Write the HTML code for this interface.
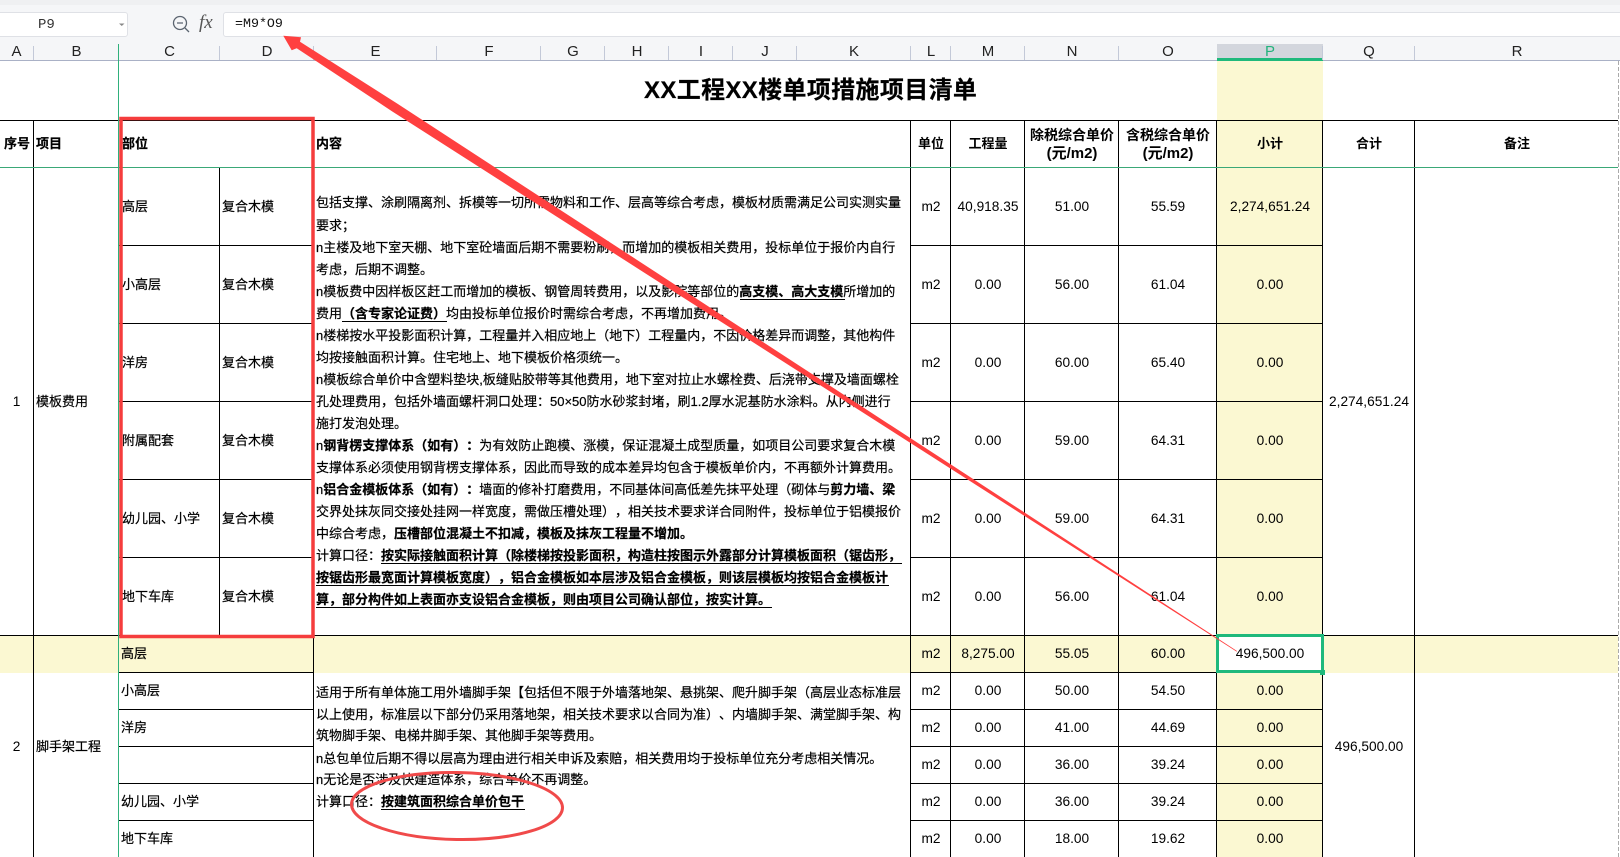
<!DOCTYPE html>
<html lang="zh-CN">
<head>
<meta charset="utf-8">
<title>XX工程XX楼单项措施项目清单</title>
<style>
html,body{margin:0;padding:0;background:#fff;}
body{position:relative;width:1620px;height:857px;overflow:hidden;font-family:"Liberation Sans","Noto Sans CJK SC",sans-serif;font-size:13px;color:#000;text-spacing-trim:space-all;}
.a{position:absolute;}
.t{position:absolute;white-space:nowrap;height:20px;line-height:20px;margin-top:1px;-webkit-text-stroke:.2px #000;}
.n{font-size:13.7px;text-align:center;-webkit-text-stroke:0;}
.bar{margin-top:0;-webkit-text-stroke:0;}
.h{position:absolute;top:42px;height:20px;line-height:20px;font-size:15px;color:#222;text-align:center;white-space:nowrap;}
.b,b{font-weight:bold;}
.L{left:911px;width:40px;}.M{left:951px;width:74px;}.N{left:1025px;width:94px;}.O{left:1119px;width:98px;}.P{left:1217px;width:106px;}.Q{left:1323px;width:92px;}.R{left:1415px;width:204px;}
.A{left:0;width:33px;}
.B{left:36px;}.C{left:122px;}.C2{left:121px;}.D{left:222px;}.E{left:316px;}
.u{position:absolute;height:1px;background:#000;}
</style>
</head>
<body>
<!-- top bar -->
<div class="a" style="left:0;top:0;width:1620px;height:60px;background:#f5f6f8;"></div>
<div class="a" style="left:0;top:0;width:1620px;height:5px;background:#eff0f2;"></div>
<div class="a" style="left:-4px;top:12px;width:130px;height:23px;background:#fff;border:1px solid #dfe1e6;border-radius:3px;"></div>
<div class="t bar" style="left:38px;top:15px;font-family:'Liberation Mono',monospace;font-size:14px;color:#333;">P9</div>
<svg class="a" style="left:0;top:0" width="320" height="44" viewBox="0 0 320 44">
<path d="M119 23.500h5.500l-2.750 2.500z" fill="#888"/>
<circle cx="180" cy="23" r="6.500" fill="none" stroke="#5b6470" stroke-width="1.300"/>
<path d="M185 28l4 4M177 23h6" fill="none" stroke="#5b6470" stroke-width="1.300"/>
</svg>
<div class="t bar" style="left:199px;top:13px;font-family:'Liberation Serif',serif;font-style:italic;font-size:19px;color:#555;">fx</div>
<div class="a" style="left:223px;top:12px;width:1400px;height:23px;background:#fff;border:1px solid #dfe1e6;border-radius:3px;"></div>
<div class="t bar" style="left:235px;top:14px;font-family:'Liberation Mono',monospace;font-size:13.300px;color:#111;">=M9*O9</div>

<!-- column header -->
<div class="a" style="left:1217px;top:44px;width:106px;height:15px;background:#d3d6dd;"></div>
<div class="a" style="left:0;top:60px;width:1620px;height:1px;background:#aab1c6;"></div>
<div class="a" style="left:1217px;top:58px;width:106px;height:3px;background:#1fb97c;"></div>
<svg class="a" style="left:0;top:44px" width="1620" height="16" viewBox="0 0 1620 16">
<path d="M33.500 2V16M219.500 2V16M313.500 2V16M436.500 2V16M540.500 2V16M604.500 2V16M668.500 2V16M732.500 2V16M796.500 2V16M910.500 2V16M950.500 2V16M1024.500 2V16M1118.500 2V16M1322.500 2V16M1414.500 2V16" stroke="#c3c9d8" stroke-width="1" fill="none"/>
</svg>
<div class="h" style="left:0;width:33px;">A</div>
<div class="h" style="left:34px;width:85px;">B</div>
<div class="h" style="left:119px;width:101px;">C</div>
<div class="h" style="left:220px;width:94px;">D</div>
<div class="h" style="left:314px;width:123px;">E</div>
<div class="h" style="left:437px;width:104px;">F</div>
<div class="h" style="left:541px;width:64px;">G</div>
<div class="h" style="left:605px;width:64px;">H</div>
<div class="h" style="left:669px;width:64px;">I</div>
<div class="h" style="left:733px;width:64px;">J</div>
<div class="h" style="left:797px;width:114px;">K</div>
<div class="h" style="left:911px;width:40px;">L</div>
<div class="h" style="left:951px;width:74px;">M</div>
<div class="h" style="left:1025px;width:94px;">N</div>
<div class="h" style="left:1119px;width:98px;">O</div>
<div class="h" style="left:1217px;width:106px;color:#23b37c;">P</div>
<div class="h" style="left:1323px;width:92px;">Q</div>
<div class="h" style="left:1415px;width:204px;">R</div>

<!-- yellow fills -->
<div class="a" style="left:1217px;top:61px;width:106px;height:796px;background:#fbf8d2;"></div>
<div class="a" style="left:0;top:635px;width:1618px;height:38px;background:#fbf8d2;"></div>
<div class="a" style="left:1217px;top:636px;width:106px;height:36px;background:#fff;"></div>

<!-- grid -->
<svg class="a" style="left:0;top:0" width="1620" height="857" viewBox="0 0 1620 857" shape-rendering="crispEdges">
<path d="M0 120.500H1618M0 635.500H1618
M119 245.500H313M119 323.500H313M119 401.500H313M119 479.500H313M119 557.500H313
M910 245.500H1323M910 323.500H1323M910 401.500H1323M910 479.500H1323M910 557.500H1323
M119 672.500H313M119 709.500H313M119 746.500H313M119 783.500H313M119 820.500H313
M910 672.500H1323M910 709.500H1323M910 746.500H1323M910 783.500H1323M910 820.500H1323
M33.500 120V857M313.500 120V857M910.500 120V857M950.500 120V857M1024.500 120V857M1118.500 120V857M1216.500 120V857M1322.500 120V857M1414.500 120V857
M219.500 168V635" stroke="#000" stroke-width="1" fill="none"/>
<path d="M0 167.500H1618" stroke="#3aa877" stroke-width="1" fill="none"/>
<path d="M118.500 44V857" stroke="#2fb07c" stroke-width="1" fill="none"/>
<path d="M1618.500 61V857" stroke="#aaa" stroke-width="1" stroke-dasharray="4 2" fill="none"/>
</svg>

<!-- title -->
<div class="t b" style="left:644px;top:76px;height:30px;line-height:30px;font-size:24px;letter-spacing:.35px;margin-top:0;">XX工程XX楼单项措施项目清单</div>

<!-- header row -->
<div class="t b" style="left:4px;top:133px;">序号</div>
<div class="t b B" style="top:133px;">项目</div>
<div class="t b C" style="top:133px;">部位</div>
<div class="t b E" style="top:133px;">内容</div>
<div class="t b n L" style="top:133px;font-size:13px;">单位</div>
<div class="t b n M" style="top:133px;font-size:13px;">工程量</div>
<div class="t b n N" style="top:124px;font-size:14px;">除税综合单价</div>
<div class="t b n N" style="top:143px;font-size:15px;">(元/m2)</div>
<div class="t b n O" style="top:124px;font-size:14px;">含税综合单价</div>
<div class="t b n O" style="top:143px;font-size:15px;">(元/m2)</div>
<div class="t b n P" style="top:133px;font-size:13px;">小计</div>
<div class="t b n Q" style="top:133px;font-size:13px;">合计</div>
<div class="t b n R" style="top:133px;font-size:13px;">备注</div>

<!-- section 1 left -->
<div class="t n A" style="top:391px;">1</div>
<div class="t B" style="top:391px;">模板费用</div>
<div class="t C" style="top:196px;">高层</div><div class="t D" style="top:196px;">复合木模</div>
<div class="t C" style="top:274px;">小高层</div><div class="t D" style="top:274px;">复合木模</div>
<div class="t C" style="top:352px;">洋房</div><div class="t D" style="top:352px;">复合木模</div>
<div class="t C" style="top:430px;">附属配套</div><div class="t D" style="top:430px;">复合木模</div>
<div class="t C" style="top:508px;">幼儿园、小学</div><div class="t D" style="top:508px;">复合木模</div>
<div class="t C" style="top:586px;">地下车库</div><div class="t D" style="top:586px;">复合木模</div>

<!-- section 1 content -->
<div class="t E" style="top:193px;margin-top:0;">包括支撑、涂刷隔离剂、拆模等一切所需物料和工作、层高等综合考虑，模板材质需满足公司实测实量</div>
<div class="t E" style="top:215px;">要求；</div>
<div class="t E" style="top:237px;">n主楼及地下室天棚、地下室砼墙面后期不需要粉刷，而增加的模板相关费用，投标单位于报价内自行</div>
<div class="t E" style="top:259px;">考虑，后期不调整。</div>
<div class="t E" style="top:281px;">n模板费中因样板区赶工而增加的模板、钢管周转费用，以及影院等部位的<b>高支模、高大支模</b>所增加的</div>
<div class="t E" style="top:303px;">费用<b>（含专家论证费）</b>均由投标单位报价时需综合考虑，不再增加费用。</div>
<div class="t E" style="top:325px;">n楼梯按水平投影面积计算，工程量并入相应地上（地下）工程量内，不因价格差异而调整，其他构件</div>
<div class="t E" style="top:347px;">均按接触面积计算。住宅地上、地下模板价格须统一。</div>
<div class="t E" style="top:369px;">n模板综合单价中含塑料垫块,板缝贴胶带等其他费用，地下室对拉止水螺栓费、后浇带支撑及墙面螺栓</div>
<div class="t E" style="top:391px;">孔处理费用，包括外墙面螺杆洞口处理：50×50防水砂浆封堵，刷1.2厚水泥基防水涂料。从内侧进行</div>
<div class="t E" style="top:413px;">施打发泡处理。</div>
<div class="t E" style="top:435px;">n<b>钢背楞支撑体系（如有）：</b>为有效防止跑模、涨模，保证混凝土成型质量，如项目公司要求复合木模</div>
<div class="t E" style="top:457px;">支撑体系必须使用钢背楞支撑体系，因此而导致的成本差异均包含于模板单价内，不再额外计算费用。</div>
<div class="t E" style="top:479px;">n<b>铝合金模板体系（如有）：</b>墙面的修补打磨费用，不同基体间高低差先抹平处理（砌体与<b>剪力墙、梁</b></div>
<div class="t E" style="top:501px;">交界处抹灰同交接处挂网一样宽度，需做压槽处理），相关技术要求详合同附件，投标单位于铝模报价</div>
<div class="t E" style="top:523px;">中综合考虑，<b>压槽部位混凝土不扣减，模板及抹灰工程量不增加。</b></div>
<div class="t E" style="top:545px;">计算口径：<b>按实际接触面积计算（除楼梯按投影面积，构造柱按图示外露部分计算模板面积（锯齿形，</b></div>
<div class="t E b" style="top:567px;">按锯齿形最宽面计算模板宽度），铝合金模板如本层涉及铝合金模板，则该层模板均按铝合金模板计</div>
<div class="t E b" style="top:589px;">算，部分构件如上表面亦支设铝合金模板，则由项目公司确认部位，按实计算。</div>
<div class="u" style="left:740px;top:299px;width:105px;"></div>
<div class="u" style="left:342px;top:321px;width:105px;"></div>
<div class="u" style="left:381px;top:563px;width:521px;"></div>
<div class="u" style="left:316px;top:585px;width:573px;"></div>
<div class="u" style="left:316px;top:607px;width:456px;"></div>

<!-- section 1 numbers -->
<div class="t n L" style="top:196px;">m2</div><div class="t n M" style="top:196px;">40,918.35</div><div class="t n N" style="top:196px;">51.00</div><div class="t n O" style="top:196px;">55.59</div><div class="t n P" style="top:196px;">2,274,651.24</div>
<div class="t n L" style="top:274px;">m2</div><div class="t n M" style="top:274px;">0.00</div><div class="t n N" style="top:274px;">56.00</div><div class="t n O" style="top:274px;">61.04</div><div class="t n P" style="top:274px;">0.00</div>
<div class="t n L" style="top:352px;">m2</div><div class="t n M" style="top:352px;">0.00</div><div class="t n N" style="top:352px;">60.00</div><div class="t n O" style="top:352px;">65.40</div><div class="t n P" style="top:352px;">0.00</div>
<div class="t n L" style="top:430px;">m2</div><div class="t n M" style="top:430px;">0.00</div><div class="t n N" style="top:430px;">59.00</div><div class="t n O" style="top:430px;">64.31</div><div class="t n P" style="top:430px;">0.00</div>
<div class="t n L" style="top:508px;">m2</div><div class="t n M" style="top:508px;">0.00</div><div class="t n N" style="top:508px;">59.00</div><div class="t n O" style="top:508px;">64.31</div><div class="t n P" style="top:508px;">0.00</div>
<div class="t n L" style="top:586px;">m2</div><div class="t n M" style="top:586px;">0.00</div><div class="t n N" style="top:586px;">56.00</div><div class="t n O" style="top:586px;">61.04</div><div class="t n P" style="top:586px;">0.00</div>
<div class="t n Q" style="top:391px;">2,274,651.24</div>

<!-- section 2 left -->
<div class="t n A" style="top:736px;">2</div>
<div class="t B" style="top:736px;">脚手架工程</div>
<div class="t C2" style="top:643px;">高层</div>
<div class="t C2" style="top:680px;">小高层</div>
<div class="t C2" style="top:717px;">洋房</div>
<div class="t C2" style="top:791px;">幼儿园、小学</div>
<div class="t C2" style="top:828px;">地下车库</div>

<!-- section 2 content -->
<div class="t E" style="top:682px;">适用于所有单体施工用外墙脚手架【包括但不限于外墙落地架、悬挑架、爬升脚手架（高层业态标准层</div>
<div class="t E" style="top:704px;">以上使用，标准层以下部分仍采用落地架，相关技术要求以合同为准）、内墙脚手架、满堂脚手架、构</div>
<div class="t E" style="top:726px;margin-top:0;">筑物脚手架、电梯井脚手架、其他脚手架等费用。</div>
<div class="t E" style="top:748px;">n总包单位后期不得以层高为理由进行相关申诉及索赔，相关费用均于投标单位充分考虑相关情况。</div>
<div class="t E" style="top:770px;margin-top:0;">n无论是否涉及快建造体系，综合单价不再调整。</div>
<div class="t E" style="top:792px;margin-top:0;">计算口径：<b>按建筑面积综合单价包干</b></div>
<div class="u" style="left:381px;top:809px;width:144px;"></div>

<!-- section 2 numbers -->
<div class="t n L" style="top:643px;">m2</div><div class="t n M" style="top:643px;">8,275.00</div><div class="t n N" style="top:643px;">55.05</div><div class="t n O" style="top:643px;">60.00</div><div class="t n P" style="top:643px;">496,500.00</div>
<div class="t n L" style="top:680px;">m2</div><div class="t n M" style="top:680px;">0.00</div><div class="t n N" style="top:680px;">50.00</div><div class="t n O" style="top:680px;">54.50</div><div class="t n P" style="top:680px;">0.00</div>
<div class="t n L" style="top:717px;">m2</div><div class="t n M" style="top:717px;">0.00</div><div class="t n N" style="top:717px;">41.00</div><div class="t n O" style="top:717px;">44.69</div><div class="t n P" style="top:717px;">0.00</div>
<div class="t n L" style="top:754px;">m2</div><div class="t n M" style="top:754px;">0.00</div><div class="t n N" style="top:754px;">36.00</div><div class="t n O" style="top:754px;">39.24</div><div class="t n P" style="top:754px;">0.00</div>
<div class="t n L" style="top:791px;">m2</div><div class="t n M" style="top:791px;">0.00</div><div class="t n N" style="top:791px;">36.00</div><div class="t n O" style="top:791px;">39.24</div><div class="t n P" style="top:791px;">0.00</div>
<div class="t n L" style="top:828px;">m2</div><div class="t n M" style="top:828px;">0.00</div><div class="t n N" style="top:828px;">18.00</div><div class="t n O" style="top:828px;">19.62</div><div class="t n P" style="top:828px;">0.00</div>
<div class="t n Q" style="top:736px;">496,500.00</div>

<!-- selected cell -->
<div class="a" style="left:1216px;top:634px;width:102px;height:33px;border:3px solid #1fb97c;"></div>
<div class="a" style="left:1320px;top:670px;width:5px;height:5px;background:#1fb97c;border:0;"></div>

<!-- annotations -->
<svg class="a" style="left:0;top:0" width="1620" height="857" viewBox="0 0 1620 857">
<rect x="121" y="118.500" width="192" height="518" fill="none" stroke="#f53d3d" stroke-width="3.500"/>
<polygon points="283.300,35.700 301,37.300 300,41.700 397.500,103.800 1237,651 1236.600,651.600 392.500,111.600 296.700,48.300 291.700,50.300" fill="#ff4040"/>
<ellipse cx="457" cy="806" rx="105.500" ry="33.500" fill="none" stroke="#f04a4a" stroke-width="3" transform="rotate(1 457 806)"/>
</svg>
</body>
</html>
